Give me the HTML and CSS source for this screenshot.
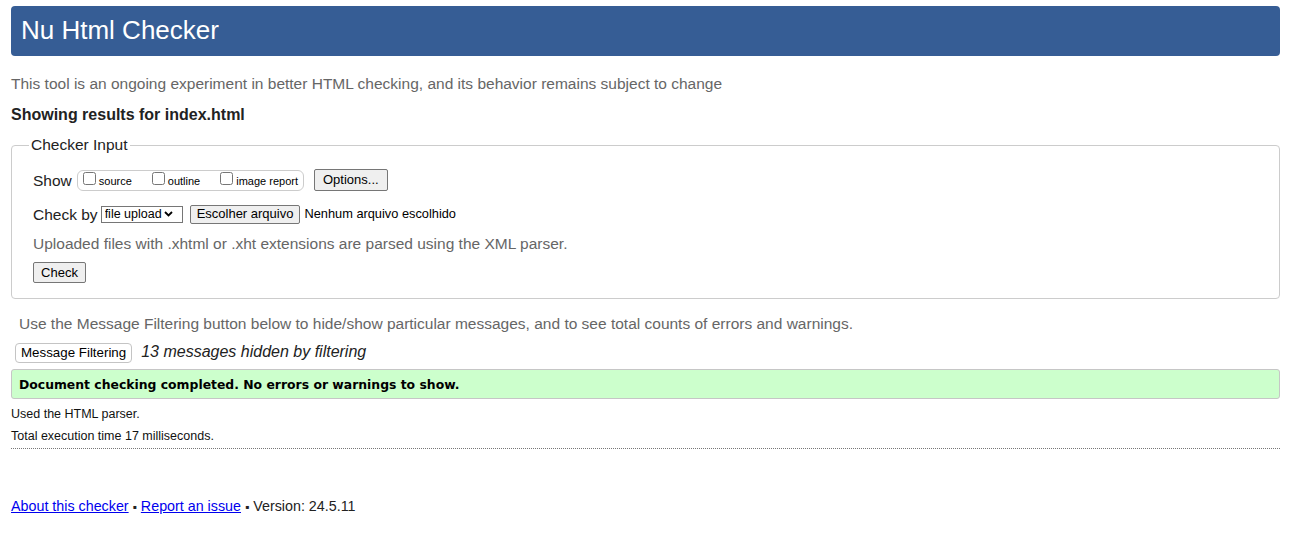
FILE: index.html
```html
<!DOCTYPE html>
<html lang="en">
<head>
<meta charset="utf-8">
<title>Nu Html Checker</title>
<link rel="stylesheet" href="styles.css">
</head>
<body>
<h1 class="title">Nu Html Checker</h1>
<p class="tagline">This tool is an ongoing experiment in better HTML checking, and its behavior remains subject to change</p>
<p class="showing">Showing results for index.html</p>
<form class="checker">
  <fieldset class="input">
    <legend class="legend">Checker Input</legend>
    <div class="row show-row">
      <span class="row-label show-label">Show</span>
      <span class="pill">
        <label class="opt"><input type="checkbox" class="cb"><span class="opt-text">source</span></label>
        <label class="opt"><input type="checkbox" class="cb"><span class="opt-text">outline</span></label>
        <label class="opt"><input type="checkbox" class="cb"><span class="opt-text">image report</span></label>
      </span>
      <button type="button" class="btn btn-options">Options...</button>
    </div>
    <div class="row by-row">
      <span class="row-label by-label">Check by</span>
      <select class="select"><option>file upload</option></select>
      <button type="button" class="btn btn-file">Escolher arquivo</button>
      <span class="file-name">Nenhum arquivo escolhido</span>
    </div>
    <p class="hint">Uploaded files with .xhtml or .xht extensions are parsed using the XML parser.</p>
    <div class="submit-row"><button type="button" class="btn btn-check">Check</button></div>
  </fieldset>
</form>
<p class="filter-note">Use the Message Filtering button below to hide/show particular messages, and to see total counts of errors and warnings.</p>
<div class="filter-row">
  <button type="button" class="btn-filter">Message Filtering</button>
  <span class="hidden-count">13 messages hidden by filtering</span>
</div>
<p class="success">Document checking completed. No errors or warnings to show.</p>
<p class="stat stat-first">Used the HTML parser.</p>
<p class="stat">Total execution time 17 milliseconds.</p>
<div class="rule"></div>
<p class="footer"><a href="#" class="link">About this checker</a> <span class="sep">▪</span> <a href="#" class="link">Report an issue</a> <span class="sep">▪</span> Version: 24.5.11</p>
</body>
</html>
```
FILE: styles.css
```css
* {
  box-sizing: border-box;
}

html {
  background: #fff;
}

body {
  margin: 0;
  padding: 0 9px 20px 11px;
  font-family: "Liberation Sans", Arial, sans-serif;
  font-size: 15.5px;
  line-height: 18px;
  color: #222;
}

.title {
  margin: 6px 0 0;
  height: 50px;
  padding: 9px 10px 11px;
  background: #365d95;
  color: #fff;
  font-size: 26px;
  font-weight: normal;
  line-height: 30px;
  border-radius: 4px;
}

.tagline {
  margin: 19px 0 0;
  color: #666;
}

.showing {
  margin: 13px 0 0;
  font-size: 16px;
  font-weight: bold;
  color: #222;
}

.checker {
  margin: 12px 0 0;
}

.input {
  margin: 0;
  min-width: 0;
  padding: 0 20px 15px 21px;
  border: 1px solid #ccc;
  border-radius: 4px;
}

.legend {
  margin-left: -4px;
  padding: 0 2px;
  line-height: 18px;
  color: #222;
}

.row {
  display: flex;
}

.show-row {
  margin-top: 15px;
  height: 22px;
  align-items: flex-end;
}

.show-label {
  margin-bottom: 1px;
}

.pill {
  display: flex;
  align-items: flex-start;
  height: 21px;
  margin-left: 5px;
  padding: 1px 5px 0;
  border: 1px solid #ccc;
  border-radius: 6px;
}

.opt {
  display: flex;
  align-items: flex-start;
  font-size: 11px;
  line-height: 14px;
  color: #000;
}

.opt + .opt {
  margin-left: 20px;
}

.cb {
  width: 13px;
  height: 13px;
  margin: 0 3px 0 0;
}

.opt-text {
  margin-top: 2px;
}

.btn {
  font-family: "Liberation Sans", Arial, sans-serif;
  font-size: 13px;
  line-height: 16px;
  color: #000;
  background: #efefef;
  border: 1px solid #767676;
  border-radius: 2px;
  padding: 0 6px;
}

.btn-options {
  height: 22px;
  margin-left: 10px;
  padding: 0 8px;
}

.by-row {
  margin-top: 13px;
  height: 20px;
  align-items: center;
}

.by-label {
  margin-top: 1px;
}

.select {
  appearance: none;
  -webkit-appearance: none;
  width: 82px;
  height: 17px;
  margin: 0 0 0 3px;
  padding: 0 0 0 3px;
  font-family: "Liberation Sans", Arial, sans-serif;
  font-size: 12.5px;
  line-height: 15px;
  color: #000;
  border: 1px solid #767676;
  border-radius: 0;
  background-color: #fff;
  background-image: url("data:image/svg+xml,%3Csvg xmlns='http://www.w3.org/2000/svg' width='9' height='6' viewBox='0 0 9 6'%3E%3Cpath d='M1 1 L4.5 4.5 L8 1' fill='none' stroke='%23000' stroke-width='1.8'/%3E%3C/svg%3E");
  background-repeat: no-repeat;
  background-position: right 9px center;
}

.btn-file {
  height: 19px;
  margin-left: 7px;
  padding: 0 6px;
}

.file-name {
  margin-left: 4px;
  font-size: 12.8px;
  color: #000;
}

.hint {
  margin: 11px 0 0;
  color: #666;
}

.submit-row {
  margin-top: 9px;
}

.btn-check {
  display: block;
  width: 53px;
  height: 21px;
}

.filter-note {
  margin: 16px 0 0;
  padding-left: 8px;
  color: #666;
}

.filter-row {
  display: flex;
  align-items: flex-start;
  margin-top: 10px;
  padding-left: 4px;
}

.btn-filter {
  height: 20px;
  padding: 0 5px;
  font-family: "Liberation Sans", Arial, sans-serif;
  font-size: 13.33px;
  line-height: 16px;
  color: #000;
  background: #fff;
  border: 1px solid #c4c4c4;
  border-radius: 4px;
}

.hidden-count {
  margin-left: 9px;
  font-size: 16px;
  font-style: italic;
  color: #222;
}

.success {
  margin: 6px 0 0;
  height: 30px;
  padding: 8px 7px 6px;
  font-family: "DejaVu Sans", Verdana, sans-serif;
  font-size: 12.4px;
  font-weight: bold;
  line-height: 14px;
  color: #000;
  background: #ccffcc;
  border: 1px solid #c6c6c6;
  border-radius: 3px;
}

.stat {
  margin: 7px 0 0;
  font-size: 12.5px;
  line-height: 15px;
  color: #111;
}

.stat-first {
  margin-top: 8px;
}

.rule {
  margin-top: 4px;
  height: 0;
  border-top: 1px dotted #777;
}

.footer {
  margin: 49px 0 0;
  font-size: 14.3px;
  line-height: 16px;
  color: #222;
}

.link {
  color: #0000ee;
  text-decoration: underline;
}

.sep {
  font-size: 12px;
}
```
